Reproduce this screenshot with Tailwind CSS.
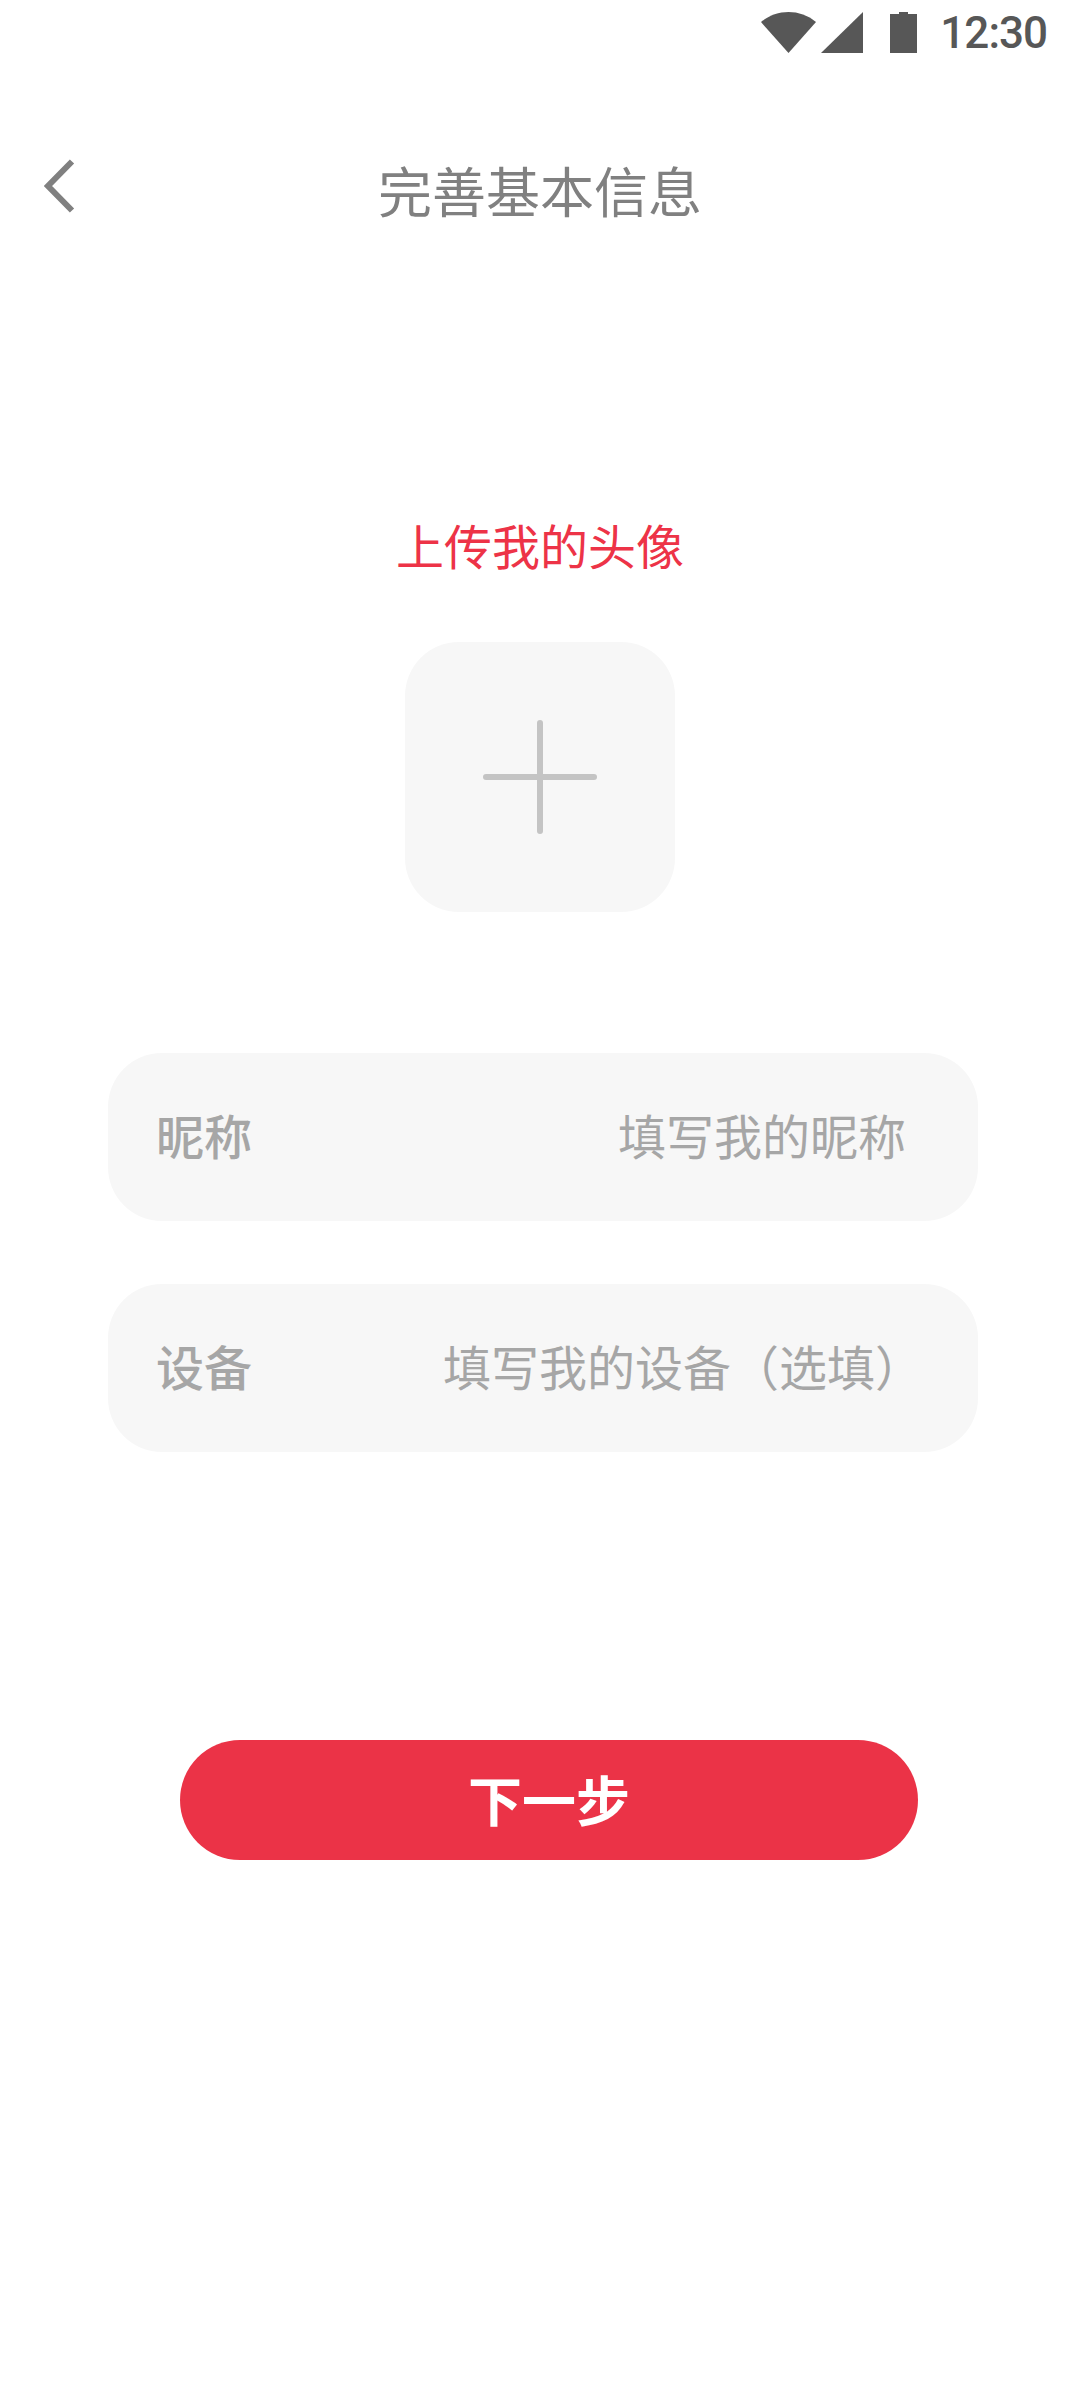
<!DOCTYPE html>
<html lang="zh-CN">
<head>
    <meta charset="UTF-8">
    <meta name="viewport" content="width=device-width, initial-scale=1.0">
    <title>完善基本信息</title>
    <script src="https://cdn.jsdelivr.net/npm/@tailwindcss/browser@4"></script>
</head>
<body class="bg-white font-['Noto_Sans_CJK_SC','Noto_Sans',sans-serif]">
<div class="w-[1080px] h-[2400px] flex flex-col overflow-hidden">
    <!-- status bar -->
    <div class="h-[66px] flex items-start justify-end pr-[33px] pt-[12px] text-[#575757]">
        <svg class="w-[55px] h-[41px]" viewBox="0 0 55 41"><path d="M0 10 C16 -3.300 39 -3.300 55 10 L27.500 41 Z" fill="#575757"/></svg>
        <svg class="w-[42px] h-[41px] ml-[5px]" viewBox="0 0 42 41"><path d="M42 0 V41 H0 Z" fill="#575757"/></svg>
        <svg class="w-[27px] h-[41px] ml-[27px]" viewBox="0 0 27 41"><path d="M9 0 H18 V2 H27 V41 H0 V2 H9 Z" fill="#575757"/></svg>
        <span class="ml-[23px] mt-[1px] font-['Roboto',sans-serif] font-medium text-[44px] leading-[41px] tracking-[-1px]">12:30</span>
    </div>
    <!-- header -->
    <div class="h-[94px] mt-[97px] relative">
        <svg class="absolute left-[44px] top-[-4px] w-[32px] h-[54px]" viewBox="0 0 32 54"><path d="M28 2.500 L4 27 L28 51.500" fill="none" stroke="#808080" stroke-width="6"/></svg>
        <div class="text-center text-[54px] leading-[54px] text-[#808080]">完善基本信息</div>
    </div>
    <!-- avatar -->
    <div class="mt-[263px] text-center text-[48px] leading-[48px] text-[#ed3347]">上传我的头像</div>
    <div class="mt-[74px] mx-auto w-[270px] h-[270px] rounded-[54px] bg-[#f7f7f7] flex items-center justify-center relative">
        <div class="w-[114px] h-[6px] rounded-full bg-[#c4c4c4]"></div>
        <div class="absolute w-[6px] h-[114px] rounded-full bg-[#c4c4c4]"></div>
    </div>
    <!-- form -->
    <div class="mt-[141px] ml-[108px] w-[870px] flex flex-col gap-[63px]">
        <div class="h-[168px] rounded-[54px] bg-[#f7f7f7] flex items-center justify-between pl-[48px] pr-[72px] pb-[6px] text-[48px] leading-[48px] text-[#a6a6a6]">
            <span class="font-medium">昵称</span>
            <span>填写我的昵称</span>
        </div>
        <div class="h-[168px] rounded-[54px] bg-[#f7f7f7] flex items-center justify-between pl-[48px] pr-[55px] pb-[6px] text-[48px] leading-[48px] text-[#a6a6a6]">
            <span class="font-medium">设备</span>
            <span>填写我的设备（选填）</span>
        </div>
    </div>
    <!-- next -->
    <div class="mt-[288px] ml-[180px] w-[738px] h-[120px] rounded-full bg-[#eb3347] flex items-center justify-center pb-[4px] text-white text-[54px] font-bold">下一步</div>
</div>
</body>
</html>
